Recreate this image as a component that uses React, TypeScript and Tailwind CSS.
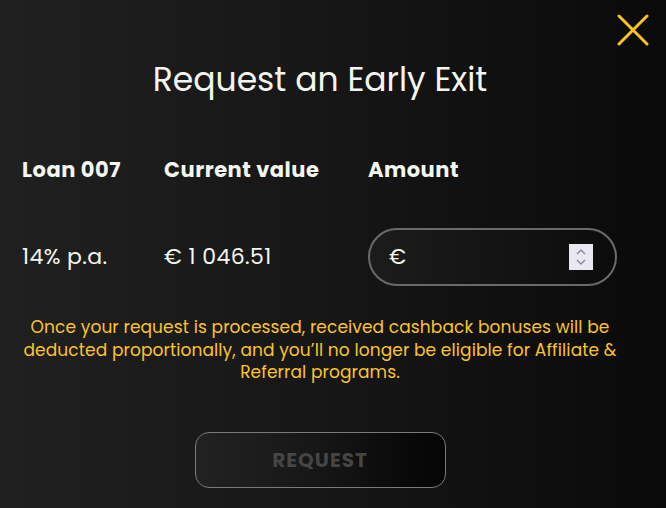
import React, { useState } from "react";

const font = { fontFamily: '"Poppins", "Inter", "Liberation Sans", sans-serif' };

const App = () => {
  const [amount, setAmount] = useState("");

  return (
    <div
      className="relative w-[666px] h-[508px] overflow-hidden bg-gradient-to-r from-[#202020] via-[#161616] to-[#0a0a0a] text-[#f3f6ee]"
      style={font}
    >
      {/* close */}
      <button className="absolute top-[14px] right-[17px] text-[#fcc420]">
        <svg width="32" height="32" viewBox="0 0 32 32" fill="none">
          <path d="M2 2L30 30M30 2L2 30" stroke="currentColor" strokeWidth="3" strokeLinecap="round" />
        </svg>
      </button>

      <div className="w-[640px] flex flex-col items-center px-5 pt-[58px]">
        <h1 className="text-[33px] leading-[44px] font-normal">Request an Early Exit</h1>

        <div className="w-full grid grid-cols-[142px_204px_1fr] pl-[2px] mt-[53px]">
          <div className="text-[21px] font-bold leading-[30px] tracking-[0.5px]">Loan 007</div>
          <div className="text-[21px] font-bold leading-[30px] tracking-[0.5px]">Current value</div>
          <div className="text-[21px] font-bold leading-[30px] tracking-[0.5px]">Amount</div>

          <div className="text-[22px] leading-[30px] tracking-[0.4px] self-center mt-[43px]">14% p.a.</div>
          <div className="text-[22px] leading-[30px] tracking-[0.4px] self-center mt-[43px]">€ 1 046.51</div>
          <div className="mt-[43px] pr-[3px]">
            <div className="h-[58px] w-[249px] rounded-full border-2 border-[#6a6a6a] bg-gradient-to-r from-[#1c1c1c] to-[#0c0c0c] flex items-center pl-[19px] pr-[22px] gap-2">
              <span className="text-[21px]">€</span>
              <input
                type="number"
                value={amount}
                onChange={(e) => setAmount(e.target.value)}
                className="flex-1 min-w-0 bg-transparent outline-none text-[20px] text-[#f3f6ee]"
              />
              <div className="w-[24px] h-[26px] bg-[#e9e8ef] flex flex-col items-center justify-center text-[#8f8ca0]">
                <svg width="12" height="8" viewBox="0 0 12 8" fill="none">
                  <path d="M2 6L6 2L10 6" stroke="currentColor" strokeWidth="1.5" />
                </svg>
                <svg width="12" height="8" viewBox="0 0 12 8" fill="none" className="mt-[2px]">
                  <path d="M2 2L6 6L10 2" stroke="currentColor" strokeWidth="1.5" />
                </svg>
              </div>
            </div>
          </div>
        </div>

        <p className="w-[616px] shrink-0 mt-[30px] text-center text-[17px] leading-[22.5px] tracking-[0.1px] text-[#fcc42a]">
          Once your request is processed, received cashback bonuses will be deducted proportionally, and you’ll no longer be eligible for Affiliate &amp; Referral programs.
        </p>

        <button
          disabled
          className="mt-[48px] w-[251px] h-[56px] rounded-[14px] border border-[#7a7a7a] bg-gradient-to-r from-[#222222] via-[#161616] to-[#050505] text-[20px] font-bold tracking-[1px] text-[#454545]"
        >
          REQUEST
        </button>
      </div>
    </div>
  );
};

export default App;
